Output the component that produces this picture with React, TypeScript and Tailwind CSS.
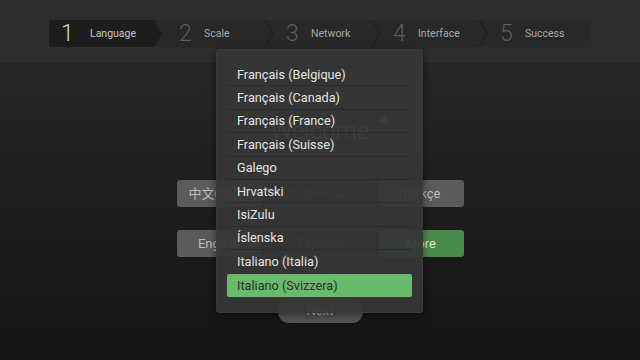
import React from 'react';

const steps = [
  { n: '1', label: 'Language' },
  { n: '2', label: 'Scale' },
  { n: '3', label: 'Network' },
  { n: '4', label: 'Interface' },
  { n: '5', label: 'Success' },
];

const languages = [
  'Français (Belgique)',
  'Français (Canada)',
  'Français (France)',
  'Français (Suisse)',
  'Galego',
  'Hrvatski',
  'IsiZulu',
  'Íslenska',
  'Italiano (Italia)',
  'Italiano (Svizzera)',
];

const Chevron: React.FC = () => (
  <svg className="absolute right-[-6px] top-0 h-[27px] w-[12px]" viewBox="0 0 12 27">
    <path d="M2 0 L10 13.5 L2 27" fill="none" stroke="#222222" strokeWidth="2" />
  </svg>
);

const Stepper: React.FC = () => (
  <div className="flex h-[27px] w-[542px] bg-[#282828]">
    {steps.map((s, i) => {
      const active = i === 0;
      return (
        <div
          key={s.n}
          className={
            active
              ? 'relative flex h-full w-[113px] shrink-0 items-center bg-[#1d1d1d] pl-[12px] [clip-path:polygon(0_0,calc(100%-8px)_0,100%_50%,calc(100%-8px)_100%,0_100%)]'
              : 'relative flex h-full w-[107px] shrink-0 items-center pl-[17px]'
          }
        >
          <span
            className={
              active
                ? 'w-[11px] text-[23px] font-light leading-none text-[#d4d4d4]'
                : 'w-[11px] text-[23px] font-light leading-none text-[#5c5c5c]'
            }
          >
            {s.n}
          </span>
          <span className={active ? 'ml-[18px] text-[10.5px] text-[#c8c8c8]' : 'ml-[14px] text-[10.5px] text-[#a8a8a8]'}>
            {s.label}
          </span>
          {!active && i < steps.length - 1 && <Chevron />}
        </div>
      );
    })}
  </div>
);

const LangButton: React.FC<{ label: string; tone: 'gray' | 'dark' | 'green' }> = ({ label, tone }) => {
  const cls =
    tone === 'green'
      ? 'bg-[#4a8b4d] text-[#d8e8d8]'
      : tone === 'dark'
      ? 'bg-[#1c1c1c] text-[#777777]'
      : 'bg-[#5b5b5b] text-[#bdbdbd]';
  return (
    <div className={`flex h-[27px] w-[85px] items-center justify-center rounded-[3px] text-[13px] ${cls}`}>
      {label}
    </div>
  );
};

export default function App() {
  return (
    <div
      className="relative h-[360px] w-[640px] overflow-hidden bg-[#1b1b1b]"
      style={{ fontFamily: 'Roboto, "Noto Sans CJK SC", sans-serif' }}
    >
      <div className="flex h-[64px] flex-col items-center border-b border-[#242424] bg-[#2c2c2c] pt-[20px]">
        <Stepper />
      </div>

      <div className="flex h-[296px] flex-col items-center bg-gradient-to-b from-[#272727] to-[#141414]">
        <div className="relative mt-[52px] text-[24px] font-light leading-[30px] text-[#cfcfcf]">
          Welcome
          <span className="absolute right-[-22px] top-[-10px] text-[15px] text-[#cfcfcf]">✦</span>
        </div>
        <div className="mt-[34px] flex flex-col gap-[23px]">
          <div className="flex gap-[16px]">
            <LangButton label="中文(简体)" tone="gray" />
            <LangButton label="Indonesian" tone="dark" />
            <LangButton label="Türkçe" tone="gray" />
          </div>
          <div className="flex gap-[16px]">
            <LangButton label="English" tone="gray" />
            <LangButton label="Español" tone="dark" />
            <LangButton label="More" tone="green" />
          </div>
        </div>
        <div className="mt-[42px] flex h-[24px] w-[85px] items-center justify-center rounded-[11px] bg-[#555555] text-[13px] text-[#bdbdbd]">
          Next
        </div>
      </div>

      <div className="absolute left-[216px] top-[49px] w-[207px] rounded-[3px] border border-[#3a3a3a] bg-[#363636]/[0.94] px-[10px] pb-[15px] pt-[13px] shadow-[0_2px_8px_rgba(0,0,0,0.5)]">
        {languages.map((l, i) => {
          const selected = i === languages.length - 1;
          const last = i >= languages.length - 2;
          return (
            <div
              key={l}
              className={
                selected
                  ? 'flex h-[23.4px] items-center rounded-[2px] bg-[#67bb6a] pl-[10px] text-[12.7px] text-[#2e2e2e]'
                  : last
                  ? 'flex h-[23.4px] items-center pl-[10px] text-[12.7px] text-[#e4e4e4]'
                  : 'flex h-[23.4px] items-center border-b border-[#2c2c2c] pl-[10px] text-[12.7px] text-[#e4e4e4]'
              }
            >
              {l}
            </div>
          );
        })}
      </div>
    </div>
  );
}
